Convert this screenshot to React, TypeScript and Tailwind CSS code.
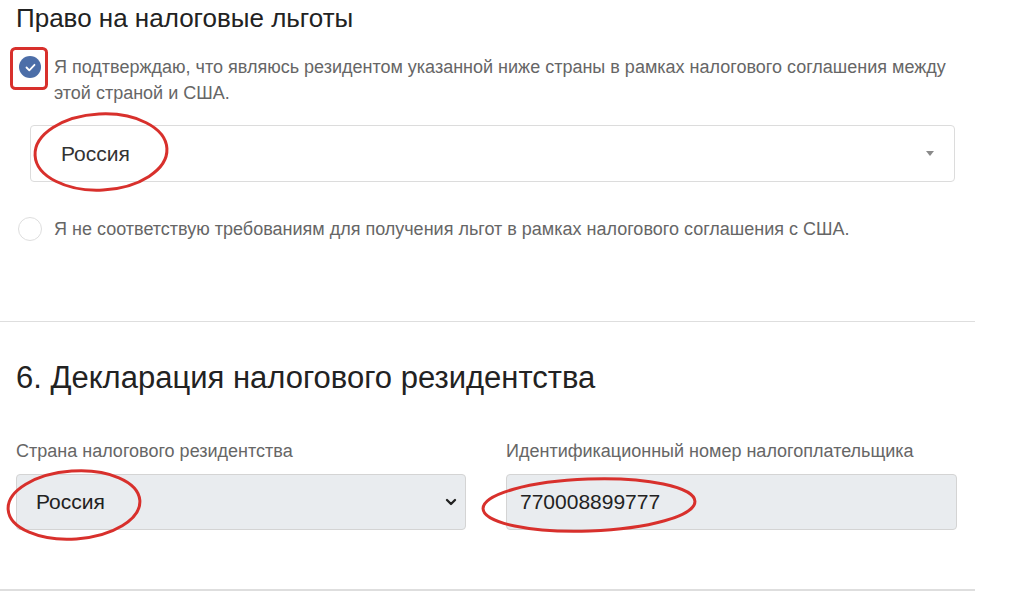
import { ChevronDown } from "lucide-react";

const RED = "#d8302c";

const Annotations = () => (
  <svg
    className="pointer-events-none absolute inset-0"
    width={1024}
    height={608}
    viewBox="0 0 1024 608"
    fill="none"
  >
    <rect x={11.5} y={48.5} width={35} height={40} rx={4} stroke={RED} strokeWidth={3} />
    <ellipse cx={101} cy={152} rx={66} ry={38} stroke={RED} strokeWidth={3} transform="rotate(-3 101 152)" />
    <ellipse cx={74} cy={505} rx={66} ry={34} stroke={RED} strokeWidth={3} transform="rotate(-4 74 505)" />
    <ellipse cx={589} cy={505} rx={106} ry={26} stroke={RED} strokeWidth={3} transform="rotate(-2 589 505)" />
  </svg>
);

export default function App() {
  return (
    <div className="relative h-[608px] w-[1024px] overflow-hidden bg-white font-['Liberation_Sans',Arial,sans-serif] text-[#212529]">
      <div className="w-[975px]">
        {/* Право на налоговые льготы */}
        <section className="h-[322px] border-b border-[#dedede] px-4">
          <h3 className="pt-[2px] text-[26px] leading-[32px] text-[#222]">Право на налоговые льготы</h3>

          <div className="mt-[20px] flex gap-[13px]">
            <span className="mt-[2px] ml-[3px] flex h-[22px] w-[22px] shrink-0 items-center justify-center rounded-full bg-[#4c6ea8]">
              <svg width="11" height="9" viewBox="0 0 11 9" fill="none">
                <path d="M1.5 4.5l2.8 2.8L9.5 1.8" stroke="white" strokeWidth="1.8" strokeLinecap="round" strokeLinejoin="round" />
              </svg>
            </span>
            <p className="text-[18px] leading-[26px] text-[#666]">
              Я подтверждаю, что являюсь резидентом указанной ниже страны в рамках налогового соглашения между этой страной и США.
            </p>
          </div>

          <div className="ml-[14px] mt-[19px] flex h-[57px] w-[925px] items-center justify-between rounded-[4px] border border-[#dcdcdc] pl-[30px] pr-[20px]">
            <span className="text-[21px] text-[#333]">Россия</span>
            <svg width="8" height="5" viewBox="0 0 8 5">
              <path d="M0 0h8L4 5z" fill="#8a8a8a" />
            </svg>
          </div>

          <div className="mt-[35px] flex items-center gap-[12px]">
            <span className="ml-[2px] h-[24px] w-[24px] shrink-0 rounded-full border border-[#dedede]" />
            <p className="text-[18px] leading-[24px] text-[#666]">
              Я не соответствую требованиям для получения льгот в рамках налогового соглашения с США.
            </p>
          </div>
        </section>

        {/* 6. Декларация налогового резидентства */}
        <section className="h-[269px] border-b-2 border-[#dedede] px-4">
          <h2 className="pt-[38px] text-[31px] leading-[36px] text-[#222]">6. Декларация налогового резидентства</h2>

          <div className="mt-[45px] grid grid-cols-[450px_451px] gap-x-[40px]">
            <div>
              <label className="block text-[18px] leading-[20px] text-[#666]">Страна налогового резидентства</label>
              <div className="mt-[13px] flex h-[56px] items-center justify-between rounded-[4px] border border-[#d4d4d4] bg-[#e9ecef] pl-[19px] pr-[6px]">
                <span className="text-[21px] text-[#222]">Россия</span>
                <ChevronDown size={16} strokeWidth={3.5} className="text-[#222]" />
              </div>
            </div>
            <div>
              <label className="block text-[18px] leading-[20px] text-[#666]">Идентификационный номер налогоплательщика</label>
              <div className="mt-[13px] flex h-[56px] items-center rounded-[4px] border border-[#d4d4d4] bg-[#e9ecef] pl-[13px]">
                <span className="text-[21px] text-[#222]">770008899777</span>
              </div>
            </div>
          </div>
        </section>
      </div>
      <Annotations />
    </div>
  );
}
